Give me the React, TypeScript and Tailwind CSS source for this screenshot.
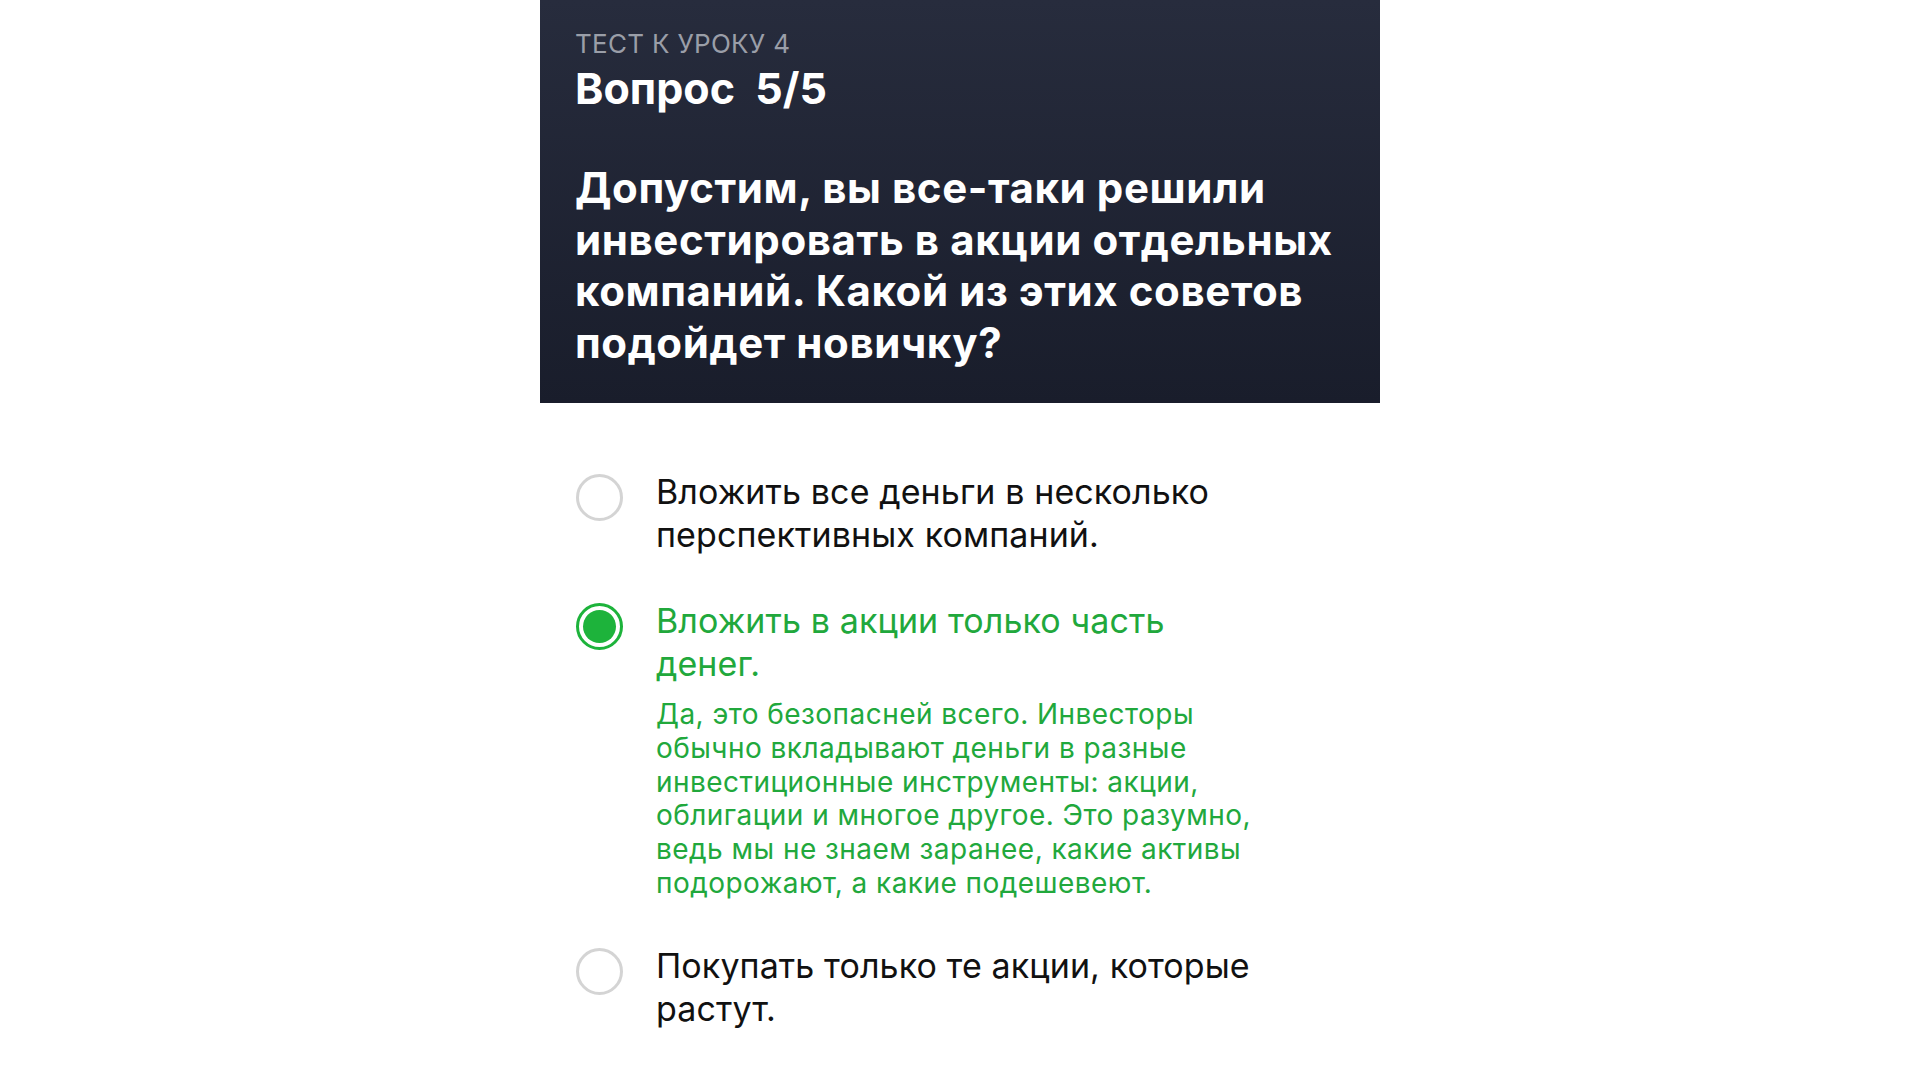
import React from "react";

const font = { fontFamily: 'Inter, "Noto Sans", "Liberation Sans", sans-serif' };

function Radio({ selected }: { selected?: boolean }) {
  if (selected) {
    return (
      <div className="flex h-[47px] w-[47px] shrink-0 items-center justify-center rounded-full border-[3px] border-[#1db33b] bg-white">
        <div className="h-[33px] w-[33px] rounded-full bg-[#1db33b]" />
      </div>
    );
  }
  return <div className="h-[47px] w-[47px] shrink-0 rounded-full border-[3px] border-[#d4d4d4] bg-white" />;
}

export default function App() {
  return (
    <div className="min-h-screen w-full bg-white" style={font}>
      <div className="mx-auto w-[840px]">
        <div className="h-[403px] bg-gradient-to-b from-[#272c3d] to-[#191d2b] px-[35px] pt-[28px]">
          <div className="text-[26px] leading-[32px] tracking-[0.3px] text-[#9a9ea8]">ТЕСТ К УРОКУ 4</div>
          <div className="mt-[2px] text-[43px] font-bold leading-[52px] text-white">Вопрос&nbsp; 5/5</div>
          <div className="mt-[48px] text-[42px] font-bold leading-[51.5px] tracking-[0.6px] text-white">
            Допустим, вы все-таки решили
            <br />
            инвестировать в акции отдельных
            <br />
            компаний. Какой из этих советов
            <br />
            подойдет новичку?
          </div>
        </div>
        <div className="flex flex-col gap-[43px] px-[36px] pt-[67px]">
          <div className="flex gap-[33px]">
            <div className="pt-[4px]"><Radio /></div>
            <div className="text-[34px] leading-[43px] tracking-[0.1px] text-[#111111]">
              Вложить все деньги в несколько
              <br />
              перспективных компаний.
            </div>
          </div>
          <div className="flex gap-[33px]">
            <div className="pt-[4px]"><Radio selected /></div>
            <div>
              <div className="text-[34px] leading-[43px] tracking-[0.1px] text-[#21a83c]">
                Вложить в акции только часть
                <br />
                денег.
              </div>
              <div className="mt-[13px] text-[28px] leading-[33.8px] tracking-[0.45px] text-[#21a83c]">
                Да, это безопасней всего. Инвесторы
                <br />
                обычно вкладывают деньги в разные
                <br />
                инвестиционные инструменты: акции,
                <br />
                облигации и многое другое. Это разумно,
                <br />
                ведь мы не знаем заранее, какие активы
                <br />
                подорожают, а какие подешевеют.
              </div>
            </div>
          </div>
          <div className="flex gap-[33px]">
            <div className="pt-[4px]"><Radio /></div>
            <div className="text-[34px] leading-[43px] tracking-[0.1px] text-[#111111]">
              Покупать только те акции, которые
              <br />
              растут.
            </div>
          </div>
        </div>
      </div>
    </div>
  );
}
